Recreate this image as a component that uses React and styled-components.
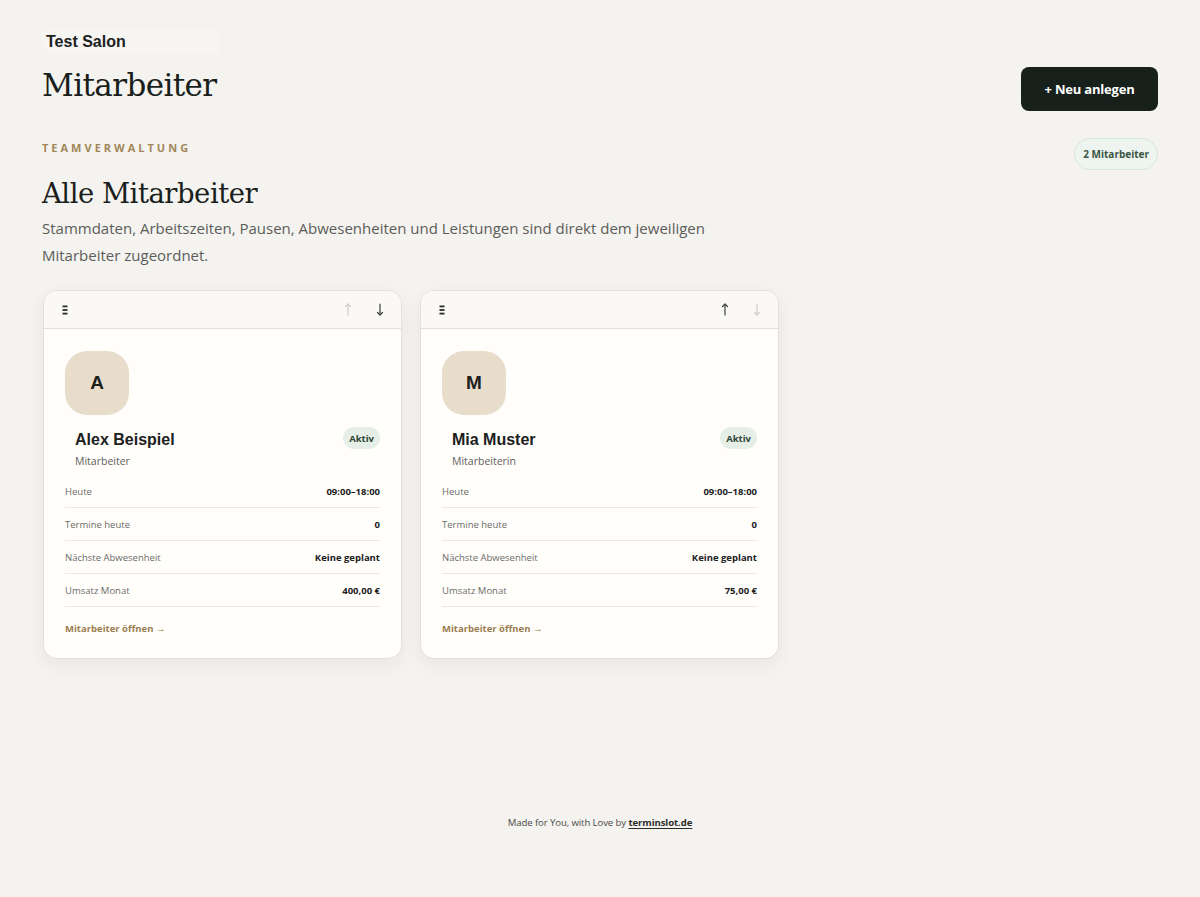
import styled, { createGlobalStyle } from "styled-components";

const GlobalStyle = createGlobalStyle`
  html, body { margin: 0; padding: 0; background: #f4f3f0; }
  body { font-family: "Open Sans", "Noto Sans", sans-serif; color: #1c211e; }
  * { box-sizing: border-box; }
`;

const staff = [
  { initial: "A", name: "Alex Beispiel", role: "Mitarbeiter", revenue: "400,00 €", upDisabled: true, downDisabled: false },
  { initial: "M", name: "Mia Muster", role: "Mitarbeiterin", revenue: "75,00 €", upDisabled: false, downDisabled: true },
];

const Page = styled.div`
  min-height: 897px;
  display: flex;
  flex-direction: column;
  padding: 30px 42px 0 42px;
`;

const TopBar = styled.header`
  display: flex;
  justify-content: space-between;
  align-items: flex-start;
`;

const Brand = styled.div`
  display: flex;
  flex-direction: column;
`;

const Salon = styled.div`
  font-family: "Liberation Sans", Arial, sans-serif;
  font-weight: 700;
  font-size: 16px;
  padding: 3px 4px 3px 4px;
  width: 178px;
  background: #f6f5f2;
`;

const PageTitle = styled.h1`
  margin: 11px 0 0 0;
  font-family: "DejaVu Serif", Georgia, serif;
  font-weight: 400;
  font-size: 31px;
  letter-spacing: -0.6px;
  line-height: 40px;
  color: #1a1f1c;
`;

const PrimaryButton = styled.button`
  height: 44px;
  width: 137px;
  margin-top: 37px;
  border: none;
  border-radius: 8px;
  background: #18201c;
  color: #fff;
  font-family: "Open Sans", sans-serif;
  font-weight: 700;
  font-size: 13px;
  letter-spacing: -0.2px;
`;

const SectionHead = styled.div`
  display: flex;
  justify-content: space-between;
  align-items: flex-start;
  margin-top: 27px;
`;

const Eyebrow = styled.div`
  font-size: 11px;
  font-weight: 700;
  letter-spacing: 3px;
  color: #a38658;
  margin-top: 2px;
`;

const CountPill = styled.div`
  height: 32px;
  padding: 0 8px;
  display: flex;
  align-items: center;
  border-radius: 16px;
  border: 1px solid #d5e6da;
  background: #eef5f0;
  font-size: 10px;
  font-weight: 700;
  color: #3b5545;
`;

const SectionTitle = styled.h2`
  margin: 5px 0 0 0;
  font-family: "DejaVu Serif", Georgia, serif;
  font-weight: 400;
  font-size: 27.5px;
  letter-spacing: -0.5px;
  line-height: 36px;
  color: #1a1f1c;
`;

const Lead = styled.p`
  margin: 4px 0 0 0;
  max-width: 700px;
  font-size: 15px;
  line-height: 27px;
  color: #5c5d59;
`;

const Grid = styled.div`
  display: grid;
  grid-template-columns: repeat(2, 359px);
  gap: 18px;
  margin-top: 21px;
  padding-left: 1px;
`;

const Card = styled.article`
  background: #fffefb;
  border: 1px solid #e3e1dc;
  border-radius: 14px;
  overflow: hidden;
  box-shadow: 0 6px 18px rgba(40, 35, 25, 0.06);
`;

const CardBar = styled.div`
  height: 38px;
  display: flex;
  align-items: center;
  justify-content: space-between;
  padding: 0 17px 0 18px;
  background: #faf9f6;
  border-bottom: 1px solid #e2e0db;
`;

const Arrows = styled.div`
  display: flex;
  gap: 24px;
  align-items: center;
`;

const ArrowButton = styled.span`
  display: flex;
  color: ${(p) => (p.$disabled ? "#cfcdc8" : "#3a3d3a")};
`;

const CardBody = styled.div`
  padding: 22px 21px 23px 21px;
`;

const Avatar = styled.div`
  width: 64px;
  height: 64px;
  border-radius: 22px;
  background: #e8dccb;
  display: flex;
  align-items: center;
  justify-content: center;
  font-family: "Liberation Sans", Arial, sans-serif;
  font-weight: 700;
  font-size: 19px;
  color: #1c211e;
`;

const NameRow = styled.div`
  display: flex;
  justify-content: space-between;
  align-items: flex-start;
  margin-top: 12px;
  padding-left: 10px;
`;

const Name = styled.div`
  font-family: "Liberation Sans", Arial, sans-serif;
  font-weight: 700;
  font-size: 16px;
  line-height: 22px;
  margin-top: 2px;
`;

const Role = styled.div`
  font-size: 10.5px;
  color: #5f605c;
  margin-top: 3px;
`;

const Badge = styled.span`
  height: 22px;
  padding: 0 6px;
  display: flex;
  align-items: center;
  border-radius: 11px;
  background: #e5efe8;
  font-size: 9.5px;
  font-weight: 700;
  color: #2f4537;
`;

const Stats = styled.dl`
  margin: 7px 0 0 0;
`;

const StatRow = styled.div`
  height: 33px;
  display: flex;
  align-items: center;
  justify-content: space-between;
  border-bottom: 1px solid #ebe9e4;
`;

const StatLabel = styled.dt`
  font-size: 9.5px;
  color: #6b6c68;
`;

const StatValue = styled.dd`
  margin: 0;
  font-size: 9.5px;
  font-weight: 700;
  color: #1c211e;
`;

const OpenLink = styled.a`
  display: block;
  margin-top: 15px;
  font-size: 9.5px;
  font-weight: 700;
  color: #9a7d50;
  text-decoration: none;
`;

const Footer = styled.footer`
  margin-top: 157px;
  text-align: center;
  font-size: 9.6px;
  color: #4a4b48;
  letter-spacing: -0.1px;
`;

const FooterLink = styled.a`
  color: #2a2c2a;
  font-weight: 700;
  text-decoration: underline;
  text-underline-offset: 2px;
`;

const Grip = () => (
  <svg width="6" height="10" viewBox="0 0 6 10">
    <rect x="0.5" y="0.5" width="5" height="1.8" fill="#2a2d2a" />
    <rect x="0.5" y="4.1" width="5" height="1.8" fill="#2a2d2a" />
    <rect x="0.5" y="7.7" width="5" height="1.8" fill="#2a2d2a" />
  </svg>
);

const Arrow = ({ down }) => (
  <svg width="8" height="13" viewBox="0 0 8 13" fill="none" stroke="currentColor" strokeWidth="1.2" strokeLinecap="round">
    {down ? (
      <>
        <path d="M4 1v11" />
        <path d="M1.5 9.5L4 12l2.5-2.5" />
      </>
    ) : (
      <>
        <path d="M4 12V1" />
        <path d="M1.5 3.5L4 1l2.5 2.5" />
      </>
    )}
  </svg>
);

const StaffCard = ({ person }) => (
  <Card>
    <CardBar>
      <Grip />
      <Arrows>
        <ArrowButton $disabled={person.upDisabled}>
          <Arrow />
        </ArrowButton>
        <ArrowButton $disabled={person.downDisabled}>
          <Arrow down />
        </ArrowButton>
      </Arrows>
    </CardBar>
    <CardBody>
      <Avatar>{person.initial}</Avatar>
      <NameRow>
        <div>
          <Name>{person.name}</Name>
          <Role>{person.role}</Role>
        </div>
        <Badge>Aktiv</Badge>
      </NameRow>
      <Stats>
        <StatRow>
          <StatLabel>Heute</StatLabel>
          <StatValue>09:00–18:00</StatValue>
        </StatRow>
        <StatRow>
          <StatLabel>Termine heute</StatLabel>
          <StatValue>0</StatValue>
        </StatRow>
        <StatRow>
          <StatLabel>Nächste Abwesenheit</StatLabel>
          <StatValue>Keine geplant</StatValue>
        </StatRow>
        <StatRow>
          <StatLabel>Umsatz Monat</StatLabel>
          <StatValue>{person.revenue}</StatValue>
        </StatRow>
      </Stats>
      <OpenLink href="#">Mitarbeiter öffnen →</OpenLink>
    </CardBody>
  </Card>
);

export default function App() {
  return (
    <>
      <GlobalStyle />
      <Page>
        <TopBar>
          <Brand>
            <Salon>Test Salon</Salon>
            <PageTitle>Mitarbeiter</PageTitle>
          </Brand>
          <PrimaryButton>+ Neu anlegen</PrimaryButton>
        </TopBar>
        <SectionHead>
          <Eyebrow>TEAMVERWALTUNG</Eyebrow>
          <CountPill>2 Mitarbeiter</CountPill>
        </SectionHead>
        <SectionTitle>Alle Mitarbeiter</SectionTitle>
        <Lead>
          Stammdaten, Arbeitszeiten, Pausen, Abwesenheiten und Leistungen sind direkt dem jeweiligen Mitarbeiter
          zugeordnet.
        </Lead>
        <Grid>
          {staff.map((p) => (
            <StaffCard key={p.name} person={p} />
          ))}
        </Grid>
        <Footer>
          Made for You, with Love by <FooterLink href="#">terminslot.de</FooterLink>
        </Footer>
      </Page>
    </>
  );
}
